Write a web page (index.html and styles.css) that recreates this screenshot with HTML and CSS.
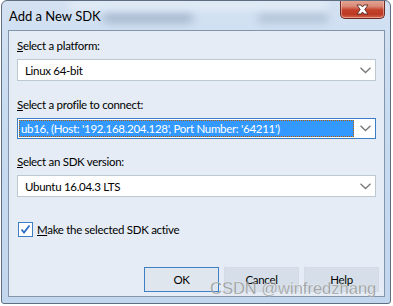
FILE: index.html
```html
<!DOCTYPE html>
<html>
<head>
<meta charset="utf-8">
<link rel="stylesheet" href="styles.css">
</head>
<body>
<div class="window">
  <div class="titlebar">
    <span class="blur b1"></span><span class="blur b2"></span><span class="blur b3"></span>
    <span class="title">Add a New SDK</span>
    <div class="close">
      <svg width="17" height="11" viewBox="0 0 17 11">
        <path d="M3 1 L7 1 L8.5 3 L10 1 L14 1 L10.8 5.5 L14 10 L10 10 L8.5 8 L7 10 L3 10 L6.2 5.5 Z" fill="#fff" stroke="#5a2a22" stroke-width="0.9" stroke-linejoin="round"/>
      </svg>
    </div>
  </div>
  <div class="client">
    <div class="label"><u>S</u>elect a platform:</div>
    <div class="combo">
      <span class="value">Linux 64-bit</span>
      <span class="chev"><svg width="11" height="7" viewBox="0 0 11 7"><path d="M0.5 0.8 L5.5 5.5 L10.5 0.8" fill="none" stroke="#777" stroke-width="1.3"/></svg></span>
    </div>
    <div class="label l2"><u>S</u>elect a profile to connect:</div>
    <div class="combo focused">
      <span class="value selected">ub16, (Host: '192.168.204.128', Port Number: '64211')</span>
      <span class="chev"><svg width="11" height="7" viewBox="0 0 11 7"><path d="M0.5 0.8 L5.5 5.5 L10.5 0.8" fill="none" stroke="#777" stroke-width="1.3"/></svg></span>
    </div>
    <div class="label l3"><u>S</u>elect an SDK version:</div>
    <div class="combo">
      <span class="value">Ubuntu 16.04.3 LTS</span>
      <span class="chev"><svg width="11" height="7" viewBox="0 0 11 7"><path d="M0.5 0.8 L5.5 5.5 L10.5 0.8" fill="none" stroke="#777" stroke-width="1.3"/></svg></span>
    </div>
    <div class="check-row">
      <span class="checkbox"><svg width="13" height="13" viewBox="0 0 13 13"><path d="M2.5 6.5 L5 9.5 L10.5 2.5" fill="none" stroke="#2b6ec9" stroke-width="1.8"/></svg></span>
      <span class="check-label"><u>M</u>ake the selected SDK active</span>
    </div>
    <div class="buttons">
      <div class="btn default">OK</div>
      <div class="btn">Cancel</div>
      <div class="btn">Help</div>
    </div>
    <div class="watermark">CSDN @winfredzhang</div>
  </div>
</div>
</body>
</html>
```
FILE: styles.css
```css
html, body {
  margin: 0;
  padding: 0;
  width: 393px;
  height: 306px;
  overflow: hidden;
  background: #ffffff;
}
body {
  font-family: Lato, "Noto Sans", "Liberation Sans", sans-serif;
  font-size: 11.5px;
  letter-spacing: -0.3px;
  color: #000;
}
.window {
  position: relative;
  margin-left: 1px;
  width: 390px;
  height: 304px;
  box-sizing: border-box;
  border: 1px solid #5e6d80;
  border-radius: 6px 6px 3px 3px;
  background: linear-gradient(180deg, #d3e1f2 0%, #c8dbf1 40%, #c2d6ee 100%);
  padding: 0 5px 6px 6px;
  display: flex;
  flex-direction: column;
  overflow: hidden;
}
.titlebar {
  position: relative;
  height: 29px;
  display: flex;
  align-items: center;
  flex-shrink: 0;
}
.blur {
  position: absolute;
  filter: blur(4px);
  border-radius: 4px;
}
.b1 { left: 95px; top: 12px; width: 90px; height: 10px; background: rgba(90,110,140,0.35); }
.b2 { left: 250px; top: 12px; width: 70px; height: 10px; background: rgba(90,110,140,0.25); }
.b3 { left: 60px; top: 0px; width: 260px; height: 8px; background: rgba(240,245,252,0.7); }
.title {
  position: relative;
  font-size: 13px;
  letter-spacing: 0;
  margin-left: 1px;
  color: #000;
}
.close {
  position: absolute;
  right: 0px;
  top: -1px;
  width: 45px;
  height: 19px;
  box-sizing: border-box;
  border: 1px solid #6b2b22;
  border-top: none;
  border-radius: 0 0 5px 5px;
  background: linear-gradient(180deg, #e6a797 0%, #d98a77 35%, #c5412b 55%, #bb3a25 80%, #d56a4f 100%);
  box-shadow: inset 0 0 0 1px rgba(255,210,200,0.5);
  display: flex;
  align-items: center;
  justify-content: center;
}
.client {
  position: relative;
  flex: 1;
  background: #e5ecf5;
  border: 1px solid #8395aa;
  padding: 0 8px 0 8px;
  display: flex;
  flex-direction: column;
}
.label {
  height: 16px;
  line-height: 16px;
  margin-top: 7px;
  white-space: nowrap;
}
.label u, .check-label u { text-decoration: underline; text-underline-offset: 1px; }
.label + .combo { margin-top: 5px; }
.l2 { margin-top: 16px; }
.l3 { margin-top: 15px; }
.combo {
  height: 22px;
  box-sizing: border-box;
  border: 1px solid #bcc8d2;
  background: #fff;
  display: flex;
  align-items: center;
  padding: 1px;
}
.combo.focused {
  border-color: #3c7dc6;
  height: 21px;
}
.value {
  flex: 1;
  padding-left: 6px;
  white-space: nowrap;
  overflow: hidden;
  line-height: 17px;
}
.value.selected {
  background: #3399ff;
  color: #fff;
  height: 17px;
  padding-left: 2px;
  outline: 1px dotted #b45d00;
  outline-offset: -1px;
  margin-right: 2px;
}
.chev {
  width: 18px;
  display: flex;
  justify-content: center;
  align-items: center;
}
.check-row {
  display: flex;
  align-items: center;
  margin-top: 24px;
  margin-left: 1px;
  height: 16px;
}
.checkbox {
  width: 15px;
  height: 15px;
  box-sizing: border-box;
  border: 1px solid #3c7fc4;
  background: #fff;
  display: flex;
  align-items: center;
  justify-content: center;
  margin-right: 4px;
}
.check-label { white-space: nowrap; }
.buttons {
  display: flex;
  justify-content: flex-end;
  gap: 5px;
  margin-top: auto;
  margin-bottom: 4px;
  margin-right: -3px;
}
.btn {
  width: 75px;
  height: 25px;
  box-sizing: border-box;
  background: #d6dfe9;
  border: 1px solid #d3dce6;
  display: flex;
  align-items: center;
  justify-content: center;
  line-height: 16px;
}
.btn.default {
  border-color: #3c7fc4;
  background: #dfe6ee;
}
.watermark {
  position: absolute;
  left: 201px;
  top: 248px;
  font-family: "Liberation Sans", Arial, sans-serif;
  font-size: 16.5px;
  letter-spacing: 0;
  color: rgba(135,135,135,0.8);
  -webkit-text-stroke: 0.3px rgba(255,255,255,0.6);
  white-space: nowrap;
}
```
